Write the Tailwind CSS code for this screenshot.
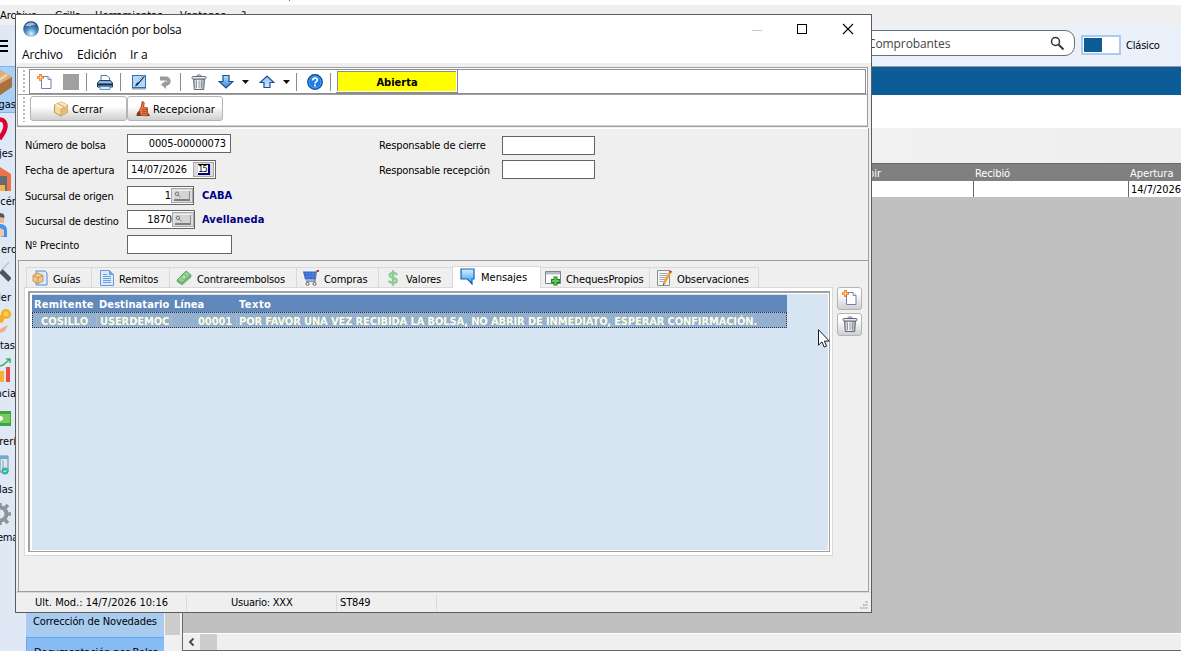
<!DOCTYPE html>
<html lang="es">
<head>
<meta charset="utf-8">
<title>Documentación por bolsa</title>
<script src="https://cdn.jsdelivr.net/npm/@tailwindcss/browser@4"></script>
</head>
<body class="w-[1181px] h-[651px] overflow-hidden relative bg-white font-['DejaVu_Sans_Condensed','DejaVu_Sans',sans-serif] text-[11px] leading-[14px] text-black whitespace-nowrap">
<!-- shared symbols -->
<svg class="absolute w-0 h-0">
  <defs>
    <linearGradient id="gBlue" x1="0" y1="0" x2="0" y2="1"><stop offset="0" stop-color="#b9dcff"/><stop offset="1" stop-color="#3f86d8"/></linearGradient>
    <linearGradient id="gUp" x1="0" y1="0" x2="0" y2="1"><stop offset="0" stop-color="#8fc0f5"/><stop offset="1" stop-color="#d6e9ff"/></linearGradient>
    <linearGradient id="gBin" x1="0" y1="0" x2="1" y2="0"><stop offset="0" stop-color="#a3abb5"/><stop offset=".4" stop-color="#ffffff"/><stop offset="1" stop-color="#9aa3ae"/></linearGradient>
    <radialGradient id="gOrb" cx=".5" cy=".8" r=".8"><stop offset="0" stop-color="#e2f3ff"/><stop offset=".45" stop-color="#4d8fc4"/><stop offset="1" stop-color="#0f3a68"/></radialGradient>
    <linearGradient id="gMsg" x1="0" y1="0" x2="0" y2="1"><stop offset="0" stop-color="#d4efff"/><stop offset="1" stop-color="#2f9bf5"/></linearGradient>
    <symbol id="new" viewBox="0 0 16 16"><path d="M4.500 2.500h6.500l3 3v9h-9.500z" fill="#fff" stroke="#7d78b8"/><path d="M11 2.500v3h3" fill="#e6ecfa" stroke="#7d8ac0"/><path d="M3.500 0v7M0 3.500h7" stroke="#ee7a1c" stroke-width="2.600"/><path d="M3.500 1.200v4.600M1.200 3.500h4.600" stroke="#ffd9a0" stroke-width=".9"/></symbol>
    <symbol id="bin" viewBox="0 0 16 16"><path d="M2.500 5h11l-.8 10.500h-9.400z" fill="url(#gBin)" stroke="#666d78"/><path d="M5.500 6.500v7.500M8 6.500v7.500M10.500 6.500v7.500" stroke="#7d8590" stroke-width=".8"/><rect x="1" y="2.500" width="14" height="2.500" rx="1" fill="#e9ecee" stroke="#666d78"/><path d="M5.500 2.200c.4-1.800 4.600-1.800 5 0" fill="none" stroke="#666d78"/></symbol>
    <symbol id="box" viewBox="0 0 16 16"><path d="M8 1l6.500 3v7.500L8 15 1.500 11.500V4z" fill="#f3dba4" stroke="#b98a3c" stroke-width=".9"/><path d="M8 7.500V15l6.500-3.500V4z" fill="#e3bf78"/><path d="M1.500 4L8 7.500 14.500 4 8 1z" fill="#fbe9bd"/><path d="M8 7.500V15M4.500 2.500l6.500 3.300v2.700" fill="none" stroke="#c39a50" stroke-width=".8"/></symbol>
    <symbol id="lookup" viewBox="0 0 18 11"><rect x="1" y="0" width="16" height="9" fill="#d4d4d4"/><path d="M0 9.500V.5h17" fill="none" stroke="#ececec"/><path d="M1 10h16" fill="none" stroke="#222"/><path d="M16.500 1v9" stroke="#8a8a8a"/><circle cx="4" cy="3.800" r="1.700" fill="none" stroke="#777"/><path d="M5.500 5.300l2 2" stroke="#777"/></symbol>
  </defs>
</svg>

<!-- application behind the dialog -->
<div class="h-full flex flex-col">
  <div class="h-[5px] bg-white pl-[289px]"><div class="w-px h-px bg-gray-500"></div></div>
  <div class="h-[20px] bg-[#efefef] flex pt-[4px] gap-[14px]"><span class="w-[41px]">Archivo</span><span class="w-[26px]">Grilla</span><span class="w-[71px]">Herramientas</span><span class="w-[47px]">Ventanas</span><span>?</span></div>
  <div class="flex-1 flex min-h-0">
    <!-- module bar -->
    <div class="w-[26px] bg-[#dfe9f5] shrink-0 flex flex-col overflow-hidden">
      <div class="h-[41px] flex flex-col gap-[3px] pt-[15px]"><i class="block h-[2px] w-[8px] bg-black"></i><i class="block h-[2px] w-[8px] bg-black"></i><i class="block h-[2px] w-[8px] bg-black"></i></div>
      <div class="h-[47px] bg-[#a9d1f7] border-y border-[#74b6ee] relative"><svg class="w-[13px] h-[28px] mt-[2px]" viewBox="0 0 13 28"><path d="M0 1l12 7v10L0 26z" fill="#c08a54"/><path d="M0 1l12 7-12 7z" fill="#dcae7a"/><path d="M0 15l12-7v10L0 26z" fill="#a9713d"/><path d="M0 9l6-4 2 1-8 6z" fill="#f0d7b4"/></svg><span class="absolute right-[10px] top-[31px]">gas</span></div>
      <div class="h-[48px] relative"><svg class="w-[8px] h-[28px] mt-[4px]" viewBox="0 0 8 28"><path d="M0 2.500c3.500 0 5.500 3 5.500 6.500 0 5-3 8-6 13" fill="none" stroke="#e0002c" stroke-width="4.500"/></svg><span class="absolute right-[13px] top-[34px]">jes</span></div>
      <div class="h-[48px] relative"><svg class="w-[11px] h-[26px] mt-[5px]" viewBox="0 0 11 26"><path d="M0 1l11 7v17H0z" fill="#e9764b"/><path d="M0 10h7v15H0z" fill="#686b74"/><path d="M0 19h5v6H0z" fill="#f2b54a"/></svg><span class="absolute right-[8px] top-[34px]">cén</span></div>
      <div class="h-[48px] relative"><svg class="w-[8px] h-[26px] mt-[4px]" viewBox="0 0 8 26"><path d="M0 1c3-1 5 2 4 6v3H0z" fill="#f1b58c"/><path d="M0 0c4 0 5 3 4 5L0 4z" fill="#545464"/><path d="M0 11c5 0 7 3 7 7v6H0z" fill="#3f93e8"/><path d="M0 15l4 2v6l-4 1z" fill="#f2c9a2"/></svg><span class="absolute right-[9px] top-[34px]">ero</span></div>
      <div class="h-[48px] relative"><svg class="w-[11px] h-[26px] mt-[4px]" viewBox="0 0 11 26"><path d="M0 11L9 1" stroke="#b9bfc5" stroke-width="1.200"/><path d="M1 10l9 9" stroke="#51535e" stroke-width="5"/></svg><span class="absolute right-[15px] top-[34px]">der</span></div>
      <div class="h-[48px] relative"><svg class="w-[11px] h-[26px] mt-[3px]" viewBox="0 0 11 26"><circle cx="6" cy="6" r="5" fill="#f9ad1e"/><circle cx="6" cy="6" r="2.500" fill="#ffd057"/><circle cx="0" cy="11" r="4" fill="#f9ad1e"/><path d="M0 21l8-4-3 6-5 2z" fill="#f5a98c"/></svg><span class="absolute right-[11px] top-[34px]">tas</span></div>
      <div class="h-[48px] relative"><svg class="w-[12px] h-[26px] mt-[5px]" viewBox="0 0 12 26"><path d="M0 8l3-1 7-6M6 1h4v4" fill="none" stroke="#33b36b" stroke-width="1.500"/><path d="M0 13h4v11H0z" fill="#f9b233"/><path d="M6 9h4v15H6z" fill="#ee4b3d"/></svg><span class="absolute right-[10px] top-[34px]">ncia</span></div>
      <div class="h-[48px] relative"><svg class="w-[12px] h-[20px] mt-[9px]" viewBox="0 0 12 20"><path d="M0 1h11v15H0z" fill="#3aa63f"/><path d="M0 4h10v9H0z" fill="#7cc95d"/><path d="M0 6c4 0 4 5 0 5" fill="#fff"/></svg><span class="absolute right-[10px] top-[34px]">rerí</span></div>
      <div class="h-[48px] relative"><svg class="w-[10px] h-[26px] mt-[6px]" viewBox="0 0 10 26"><path d="M0 1h8v16H0z" fill="#dbe6ee" stroke="#6f8aa0"/><path d="M0 1h8v3H0z" fill="#6faad0"/><path d="M3 5v12" stroke="#8aa0b4"/><circle cx="5" cy="16" r="3.500" fill="#2fb5a4"/><path d="M3.500 16l1 1 2-2" stroke="#fff" fill="none"/></svg><span class="absolute right-[13px] top-[34px]">las</span></div>
      <div class="h-[48px] relative"><svg class="w-[12px] h-[26px] mt-[5px]" viewBox="0 0 12 26"><circle cx="0" cy="12" r="6.500" fill="none" stroke="#8f9499" stroke-width="4"/><path d="M7 12h4M5 6l3-3M5 18l3 3M0 1v4M0 19v4" stroke="#8f9499" stroke-width="3.500"/></svg><span class="absolute left-[-3px] top-[34px] tracking-[-.3px]">ema</span></div>
    </div>
    <div class="flex-1 flex flex-col min-w-0">
      <div class="h-[42px] bg-[#eaf1fb] flex items-start border-b border-[#8e9aa6]">
        <div class="ml-[774px] mt-[5px] w-[275px] h-[26px] rounded-[10px] border border-[#6e6e6e] bg-white flex items-center justify-between pl-[67px] pr-[9px] text-[#444] font-[family-name:'Open_Sans',sans-serif] text-[12px]"><span class="tracking-[-.1px] pt-px">Comprobantes</span>
          <svg class="w-[15px] h-[15px]" viewBox="0 0 15 15"><circle cx="5.500" cy="5.500" r="4" fill="none" stroke="#333" stroke-width="1.500"/><path d="M8.500 8.500l5 5" stroke="#333" stroke-width="1.800"/></svg></div>
        <div class="ml-[6px] mt-[10px] w-[40px] h-[20px] border-2 border-[#a9cbf0] bg-white p-px"><div class="w-[18px] h-[14px] bg-[#0b5c97]"></div></div>
        <span class="ml-[5px] mt-[14px] tracking-[-.2px]">Clásico</span>
      </div>
      <div class="h-[28px] bg-[#0b5c97]"></div>
      <div class="h-[33px] bg-white"></div>
      <div class="flex-1 flex min-h-0">
        <div class="w-[156px] shrink-0 bg-[#f0f0f0] flex items-end">
          <div class="w-[138px] h-[39px] flex flex-col bg-[#a9cbf0]"><div class="h-[25px] pl-[7px] pt-[3px] tracking-[-.12px]">Corrección de Novedades</div><div class="h-[14px] bg-[#86bcf3] border-t border-l border-[#5fa8ec] pt-[8px] pl-[7px] overflow-hidden tracking-[-.12px]">Documentación por Bolsa</div></div>
          <div class="ml-[1px] w-[15px] h-[39px]"><div class="h-[23px] bg-[#cdcdcd]"></div></div>
        </div>
        <div class="flex-1 border-l border-[#696969] bg-[#c0c0c0] flex flex-col">
          <div class="h-[35px] bg-linear-to-r from-[#f9f9f9] to-[#eeeeee]"></div>
          <div class="h-[18px] bg-[#808080] border-t border-[#696969] text-white grid grid-cols-[790px_155px_1fr] pt-[3px]"><span class="pl-[685px]">bir</span><span class="pl-[2px] tracking-[-.1px]">Recibió</span><span class="pl-[2px]">Apertura</span></div>
          <div class="h-[16px] bg-white grid grid-cols-[790px_155px_1fr] grid-rows-[16px] leading-[18px]"><span></span><span class="border-l border-[#696969]"></span><span class="border-l border-[#696969] pl-[2px] tracking-[-.1px]">14/7/2026</span></div>
          <div class="flex-1"></div>
          <div class="h-[18px] bg-[#efefef] border-t border-t-white border-b border-b-[#696969] flex"><svg class="w-[17px] h-[16px]" viewBox="0 0 17 16"><path d="M10.500 4.500L7 8l3.500 3.500" fill="none" stroke="#444" stroke-width="1.800"/></svg><div class="w-[17px] bg-[#cdcdcd]"></div></div>
        </div>
      </div>
    </div>
  </div>
</div>

<!-- dialog -->
<div class="absolute left-[15px] top-[14px] w-[857px] h-[599px] border border-[#5c5c5c] bg-[#efefef] flex flex-col">
  <div class="h-[27px] bg-white flex items-center font-[family-name:'Open_Sans',sans-serif] text-[12px] pt-[2px]">
    <svg class="ml-[7px] w-[16px] h-[16px] -mt-px" viewBox="0 0 16 16"><circle cx="8" cy="8" r="7.800" fill="url(#gOrb)"/><path d="M2 5c2-4 8-5 11-1-3-1-5 2-8 1z" fill="#b7d3ea" opacity=".8"/></svg>
    <span class="ml-[5px] flex-1 tracking-[-.3px]">Documentación por bolsa</span>
    <svg class="w-[130px] h-[20px]" viewBox="0 0 130 20"><path d="M11 10.500h10" stroke="#c8c8c8"/><rect x="56.500" y="4.500" width="9" height="9" fill="none" stroke="#000"/><path d="M102 4l10 10M112 4l-10 10" stroke="#000" stroke-width="1.100"/></svg>
  </div>
  <div class="h-[21px] bg-white flex font-[family-name:'Open_Sans',sans-serif] text-[12px] pl-[6px] pt-[6px] gap-[14px] tracking-[-.15px]"><span class="w-[41px]">Archivo</span><span class="w-[39px]">Edición</span><span>Ir a</span></div>

  <!-- toolbars -->
  <div class="mt-[4px] ml-px w-[851px] h-[60px] border border-[#9e9e9e] bg-white flex flex-col">
    <div class="h-[27px] flex border-b border-[#9e9e9e] pt-px">
      <div class="w-[11px] pl-[5px] pt-px"><div class="w-[2px] h-[23px] bg-[repeating-linear-gradient(#bbb_0_2px,#fff_2px_4px)]"></div></div>
      <div class="w-[837px] h-[25px] border border-[#8c8c8c] flex items-center pl-[7px]">
        <svg class="w-[16px] h-[16px]"><use href="#new"/></svg>
        <div class="ml-[10px] w-[16px] h-[16px] bg-[#a0a0a0]"></div>
        <div class="ml-[7px] w-px h-[18px] bg-[#8c8c8c]"></div>
        <svg class="ml-[10px] w-[16px] h-[16px]" viewBox="0 0 16 16"><path d="M4 7V1.500h6L12.500 4v3" fill="#fff" stroke="#4d78b0"/><path d="M2.500 6.500h11L15.500 9v4h-15V9z" fill="#8db4e4" stroke="#1f3f66"/><path d="M1 10.500h14" stroke="#14263f" stroke-width="2"/><path d="M3 12.500h10v3H3z" fill="#d5eaff" stroke="#4d78b0" stroke-width=".8"/></svg>
        <div class="ml-[7px] w-px h-[18px] bg-[#8c8c8c]"></div>
        <svg class="ml-[10px] w-[16px] h-[16px]" viewBox="0 0 16 16"><rect x="1.500" y="1.500" width="13" height="12" fill="#b5d8f8" stroke="#2f6fae"/><path d="M1 14.800h14" stroke="#7c8b9c" stroke-width="1.200"/><path d="M5.500 11L13 2" stroke="#1d3c68" stroke-width="2"/><path d="M7 8.300L13 1.200" stroke="#eaf6ff" stroke-width="1"/><path d="M4 12.500l1-2.500 1.500 1.200z" fill="#222"/></svg>
        <svg class="ml-[10px] w-[16px] h-[16px]" viewBox="0 0 16 16"><path d="M3 4.500h6a2.800 2.800 0 0 1 0 5.600H8" fill="none" stroke="#9b9b9b" stroke-width="3.800"/><path d="M9 6.500v8.500L4 10.500z" fill="#9b9b9b"/></svg>
        <div class="ml-[7px] w-px h-[18px] bg-[#8c8c8c]"></div>
        <svg class="ml-[10px] w-[16px] h-[16px]"><use href="#bin"/></svg>
        <svg class="ml-[11px] w-[16px] h-[16px]" viewBox="0 0 16 16"><path d="M5 1.500h6v6h3.800L8 14 1.200 7.500H5z" fill="url(#gBlue)" stroke="#1b4f8f" stroke-width="1.200"/></svg>
        <svg class="ml-[8px] w-[7px] h-[4px]" viewBox="0 0 7 4"><path d="M0 0h7L3.500 4z" fill="#111"/></svg>
        <svg class="ml-[10px] w-[16px] h-[16px]" viewBox="0 0 16 16"><path d="M5 13.500h6v-5h3.800L8 2 1.200 8.500H5z" fill="url(#gUp)" stroke="#1b4f8f" stroke-width="1.200"/></svg>
        <svg class="ml-[8px] w-[7px] h-[4px]" viewBox="0 0 7 4"><path d="M0 0h7L3.500 4z" fill="#111"/></svg>
        <div class="ml-[6px] w-px h-[18px] bg-[#8c8c8c]"></div>
        <svg class="ml-[10px] w-[16px] h-[16px]" viewBox="0 0 17 17"><circle cx="8.500" cy="8.500" r="7.700" fill="#1c7be6" stroke="#0a4390" stroke-width="1.400"/><circle cx="8.500" cy="8.500" r="6.400" fill="none" stroke="#49b4f8" stroke-width=".9"/><path d="M6 7c0-3.500 5-3.500 5-.7C11 8.200 8.500 8 8.500 10" fill="none" stroke="#fff" stroke-width="1.900"/><rect x="7.500" y="11.200" width="2" height="2" fill="#fff"/></svg>
        <div class="ml-[7px] w-px h-[18px] bg-[#8c8c8c]"></div>
        <div class="ml-[5px] w-[122px] h-[23px] border-r border-b border-[#8c8c8c] p-px"><div class="w-[119px] h-[20px] border-t border-l border-[#8c8c8c] bg-[#ff0] font-bold text-center leading-[21px]">Abierta</div></div>
      </div>
    </div>
    <div class="flex-1 flex border-b border-[#d0d0d0] pt-[1px]">
      <div class="w-[11px] pl-[5px] pt-px"><div class="w-[2px] h-[25px] bg-[repeating-linear-gradient(#bbb_0_2px,#fff_2px_4px)]"></div></div>
      <div class="ml-px w-[97px] h-[25px] rounded-[3px] border border-[#b4b4b4] bg-linear-to-b from-white from-40% to-[#cfcfcf] flex items-center pl-[22px]"><svg class="w-[16px] h-[16px]"><use href="#box"/></svg><span class="ml-[3px] mt-[2px]">Cerrar</span></div>
      <div class="w-[96px] h-[25px] rounded-[3px] border border-[#b4b4b4] bg-linear-to-b from-white from-40% to-[#cfcfcf] flex items-center pl-[8px]"><svg class="w-[14px] h-[16px]" viewBox="0 0 14 16"><path d="M6 .8c1.800-.6 2.600 1 2 3L7.500 6.500l4 .3v8L5 14.500 3.500 12l.3-3.500L5.500 5z" fill="#e27a45" stroke="#a8431b" stroke-width=".9"/><path d="M6 8.700h5M6 10.700h5M6 12.600h5" stroke="#a8431b" stroke-width=".8"/><path d="M.5 15c0-3 1.500-5 3-5l1.500 5zM11 15l1.500-3 1.500 3z" fill="#8a3417"/></svg><span class="ml-[3px] mt-[2px] tracking-[.1px]">Recepcionar</span></div>
    </div>
  </div>

  <!-- form -->
  <div class="mt-px ml-px w-[852px] h-[464px] border-r border-b border-[#9e9e9e] flex flex-col">
    <div class="h-[132px] border-t border-white pl-[8px] flex">
      <div class="w-[354px] flex flex-col">
        <div class="flex h-[25px] pt-[5px]"><span class="w-[102px] pt-[5px] tracking-[-.25px]">Número de bolsa</span><div class="w-[104px] h-[19px] border border-[#646464] bg-white text-right pr-[4px] pt-[2px] tracking-[-.15px]">0005-00000073</div></div>
        <div class="flex h-[26px] pt-[6px]"><span class="w-[102px] pt-[4px] tracking-[-.06px]">Fecha de apertura</span><div class="w-[89px] h-[19px] border border-[#646464] bg-white flex pl-[3px] pt-px pr-px justify-between"><span class="pt-px tracking-[-.1px]">14/07/2026</span><div class="w-[21px] h-[15px] border border-[#a8a8a8] bg-[#dcdcdc] flex justify-center"><div class="mt-px w-[12px] h-[11px] bg-white border-t border-r-2 border-b-2 border-t-black border-[#00007a] text-[9px] leading-[9px] flex justify-center tracking-[-.8px]">15</div></div></div></div>
        <div class="flex h-[25px] pt-[6px]"><span class="w-[102px] pt-[4px] tracking-[-.22px]">Sucursal de origen</span><div class="w-[67px] h-[19px] border border-[#646464] bg-white flex pt-px justify-end"><span class="pt-px">1</span><div class="w-[22px] h-[15px] border border-[#a8a8a8] bg-[#dcdcdc] p-px"><svg class="w-[18px] h-[11px]"><use href="#lookup"/></svg></div></div><span class="ml-[8px] pt-[3px] font-bold text-[#000084]">CABA</span></div>
        <div class="flex h-[25px] pt-[5px]"><span class="w-[102px] pt-[5px] tracking-[-.2px]">Sucursal de destino</span><div class="w-[68px] h-[19px] border border-[#646464] bg-white flex pt-px justify-end"><span class="pt-px tracking-[-.1px]">1870</span><div class="w-[22px] h-[15px] border border-[#a8a8a8] bg-[#dcdcdc] p-px"><svg class="w-[18px] h-[11px]"><use href="#lookup"/></svg></div></div><span class="ml-[7px] pt-[3px] font-bold text-[#000084] tracking-[.1px]">Avellaneda</span></div>
        <div class="flex h-[25px] pt-[5px]"><span class="w-[102px] pt-[4px] tracking-[-.1px]">Nº Precinto</span><div class="w-[105px] h-[19px] border border-[#646464] bg-white"></div></div>
      </div>
      <div class="flex flex-col">
        <div class="flex h-[25px] pt-[7px]"><span class="w-[123px] pt-[3px] tracking-[-.12px]">Responsable de cierre</span><div class="w-[93px] h-[19px] border border-[#646464] bg-white"></div></div>
        <div class="flex h-[26px] pt-[6px]"><span class="w-[123px] pt-[4px] tracking-[-.15px]">Responsable recepción</span><div class="w-[93px] h-[19px] border border-[#646464] bg-white"></div></div>
      </div>
    </div>

    <!-- tabs -->
    <div class="ml-px w-[850px] flex-1 border-t border-l border-[#9e9e9e] flex pl-[5px] pt-[5px]">
      <div class="w-[809px] flex flex-col">
        <div class="h-[22px] flex items-end pl-[2px] relative z-10 -mb-px tracking-[-.1px]">
          <div class="w-[66px] h-[20px] mb-px border border-b-0 border-[#d9d9d9] flex items-center pl-[5px] pt-[2px]"><svg class="w-[16px] h-[16px] -mt-px" viewBox="0 0 16 16"><path d="M4 1h9l2 2v12H4z" fill="#dcebfb" stroke="#5a8ccc"/><path d="M1 5.500L6 3l5 2.500V11l-5 2.500L1 11z" fill="#f0c889" stroke="#b9853c" stroke-width=".8"/><path d="M1 5.500L6 8l5-2.500M6 8v5.500" fill="none" stroke="#b9853c" stroke-width=".8"/></svg><span class="ml-[5px] pt-[2px]">Guías</span></div>
          <div class="w-[78px] h-[20px] mb-px border border-l-0 border-b-0 border-[#d9d9d9] flex items-center pl-[8px] pt-[2px]"><svg class="w-[14px] h-[16px] -mt-px" viewBox="0 0 14 16"><path d="M.5.500h9l4 4v11H.5z" fill="#d9eaff" stroke="#6f97d2"/><path d="M9.500.500v4h4" fill="#7fb0ee" stroke="#6f97d2"/><path d="M3 6.500h8M3 8.500h8M3 10.500h8M3 12.500h8M3 4.500h4" stroke="#6fa0e0"/></svg><span class="ml-[5px] pt-[2px]">Remitos</span></div>
          <div class="w-[127px] h-[20px] mb-px border border-l-0 border-b-0 border-[#d9d9d9] flex items-center pl-[6px] pt-[2px]"><svg class="w-[16px] h-[16px] -mt-px" viewBox="0 0 16 16"><path d="M1 10L10 1l5 4L6 13z" fill="#8fd090" stroke="#5dab65"/><path d="M1 10v1.500L6 15l9-8V5L6 13z" fill="#6fbc76" stroke="#5dab65" stroke-width=".7"/><circle cx="8" cy="7" r="2" fill="#c4e9c4" stroke="#5dab65" stroke-width=".7"/></svg><span class="ml-[5px] pt-[2px] tracking-[-.15px]">Contrareembolsos</span></div>
          <div class="w-[82px] h-[20px] mb-px border border-l-0 border-b-0 border-[#d9d9d9] flex items-center pl-[6px] pt-[2px]"><svg class="w-[16px] h-[16px] -mt-px" viewBox="0 0 16 16"><path d="M0 1.500h13l-1 8H2z" fill="#3465cc"/><path d="M1 4h12M1.500 6.500h11M4 2v7.500M7 2v7.500M10 2v7.500" stroke="#6f98e6" stroke-width=".5"/><path d="M15.500.800l-2 .4-1.500 10H3" fill="none" stroke="#6b6f97" stroke-width="1.200"/><path d="M14 0h2v1.800h-2z" fill="#c22"/><circle cx="4.500" cy="13.800" r="1.500" fill="#fff" stroke="#555"/><circle cx="11.500" cy="13.800" r="1.500" fill="#fff" stroke="#555"/></svg><span class="ml-[5px] pt-[2px]">Compras</span></div>
          <div class="w-[73px] h-[20px] mb-px border border-x-0 border-b-0 border-[#d9d9d9] flex items-center pl-[8px] pt-[2px]"><svg class="w-[12px] h-[16px] -mt-px" viewBox="0 0 12 16"><path d="M10 5C9 2.300 2.500 2 2.500 5.200c0 3 7.300 2.200 7.300 5.200 0 3.200-7 3-8 .2M6 .3v15.400" fill="none" stroke="#8dcb96" stroke-width="2.300"/></svg><span class="ml-[7px] pt-[2px]">Valores</span></div>
          <div class="w-[89px] h-[22px] border border-b-0 border-[#d9d9d9] bg-white flex items-center pl-[7px]"><svg class="w-[15px] h-[17px] -mt-[3px]" viewBox="0 0 15 17"><path d="M1 1h13v10h-2v5l-4.500-5H1z" fill="url(#gMsg)" stroke="#1761b8" stroke-width="1.200"/></svg><span class="ml-[6px] pt-[1px] tracking-normal">Mensajes</span></div>
          <div class="w-[109px] h-[20px] mb-px border border-l-0 border-b-0 border-[#d9d9d9] flex items-center pl-[4px] pt-[2px]"><svg class="w-[16px] h-[16px] -mt-px" viewBox="0 0 16 16"><path d="M.5 1.500h15v12H.5z" fill="#fff" stroke="#7d838c"/><path d="M1 2h14v2.500H1z" fill="#b7bcc4"/><path d="M10.500 6.500v9M6 11h9" stroke="#1c7a25" stroke-width="4"/><path d="M10.500 7.300v7.400M6.800 11h7.400" stroke="#55cf4f" stroke-width="2.200"/></svg><span class="ml-[5px] pt-[2px]">ChequesPropios</span></div>
          <div class="w-[109px] h-[20px] mb-px border border-l-0 border-b-0 border-[#d9d9d9] flex items-center pl-[7px] pt-[2px]"><svg class="w-[15px] h-[16px] -mt-px" viewBox="0 0 15 16"><path d="M.5.500h12v15H.5z" fill="#f7f7f7" stroke="#8d8d8d"/><path d="M2.500 3.500h8M2.500 5.500h8M2.500 7.500h7M2.500 9.500h6M2.500 11.500h4" stroke="#a7a7a7"/><path d="M7 13.500L13.500 1.500" stroke="#eda222" stroke-width="2.400"/><path d="M13 2.500l1-1.700" stroke="#c0392b" stroke-width="2.400"/><path d="M6 15.500l.3-2.500 1.500 1z" fill="#333"/></svg><span class="ml-[5px] pt-[2px]">Observaciones</span></div>
        </div>
        <div class="h-[269px] border border-[#d9d9d9] bg-white pt-[3px] pl-[3px]">
          <div class="w-[802px] h-[261px] border-t-2 border-l-2 border-r border-b border-[#a0a0a0] bg-white p-px pl-[2px]">
            <div class="h-full bg-[#d7e4f2] flex flex-col pt-px">
              <div class="w-[755px] h-[17px] bg-[#6088ba] text-white font-bold flex pt-[3px]"><span class="w-[65px] pl-[2px] tracking-[.2px]">Remitente</span><span class="w-[75px] pl-[2px] tracking-[.1px]">Destinatario</span><span class="w-[65px] pl-[2px]">Línea</span><span class="pl-[2px] tracking-[.5px]">Texto</span></div>
              <div class="w-[755px] h-[16px] bg-[#94b0d0] border border-dotted border-[#333] text-[#ffffe1] font-bold flex leading-[17px]"><span class="w-[64px] pl-[8px] border-r border-[#b5b5b5]">COSILLO</span><span class="w-[75px] pl-[3px] border-r border-[#b5b5b5] tracking-[-.1px]">USERDEMOC</span><span class="w-[65px] pr-[4px] text-right border-r border-[#b5b5b5] tracking-[-.1px]">00001</span><span class="pl-[2px] tracking-[-.11px]">POR FAVOR UNA VEZ RECIBIDA LA BOLSA, NO ABRIR DE INMEDIATO, ESPERAR CONFIRMACIÓN.</span></div>
            </div>
          </div>
        </div>
      </div>
      <div class="ml-[4px] mt-[21px] flex flex-col gap-[3px]">
        <div class="w-[25px] h-[23px] rounded-[3px] border border-[#b4b4b4] bg-linear-to-b from-white from-30% to-[#cfcfcf] flex items-center justify-center"><svg class="w-[16px] h-[16px] -mt-px"><use href="#new"/></svg></div>
        <div class="w-[25px] h-[23px] rounded-[3px] border border-[#b4b4b4] bg-linear-to-b from-white from-30% to-[#cfcfcf] flex items-center justify-center"><svg class="w-[16px] h-[16px] -mt-px"><use href="#bin"/></svg></div>
      </div>
    </div>
  </div>

  <!-- status bar -->
  <div class="flex-1 flex items-center border-t border-[#d9d9d9]">
    <span class="w-[171px] h-[16px] pt-px pl-[19px] border-r border-[#d9d9d9]">Ult. Mod.: 14/7/2026 10:16</span><span class="w-[150px] h-[16px] pt-px pl-[44px] border-r border-[#d9d9d9] tracking-[-.25px]">Usuario: XXX</span><span class="w-[100px] h-[16px] pt-px pl-[3px] border-r border-[#d9d9d9] tracking-[-.15px]">ST849</span>
    <svg class="ml-auto mr-[3px] mt-[4px] w-[8px] h-[8px]" viewBox="0 0 8 8"><path d="M5.500 0h2v2h-2zM2.800 3h2v2h-2zM5.500 3h2v2h-2zM0 6h2v2H0zM2.800 6h2v2h-2zM5.500 6h2v2h-2z" fill="#bdbdbd"/></svg>
  </div>
</div>

<!-- mouse pointer -->
<svg class="absolute left-[818px] top-[329px] w-[12px] h-[19px]" viewBox="0 0 12 19"><path d="M.5.700v15.500l3.500-3.300 2.200 5.200 2.300-1-2.100-5h4.900z" fill="#fff" stroke="#1b1b2f"/></svg>
</body>
</html>
